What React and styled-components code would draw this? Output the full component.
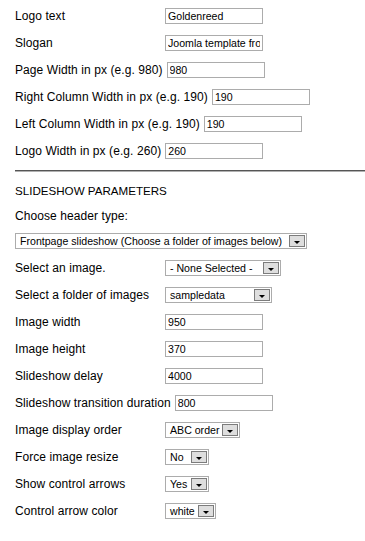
import styled, { createGlobalStyle } from "styled-components";

const Global = createGlobalStyle`
  body {
    margin: 0;
    background: #fff;
    font-family: "Liberation Sans", Arial, sans-serif;
    color: #000;
  }
`;

const Page = styled.div`
  padding: 8px 0 20px 15px;
  width: 365px;
  box-sizing: border-box;
`;

const Row = styled.div`
  display: flex;
  align-items: flex-start;
  gap: 4px;
  height: 16px;
  margin-bottom: 11px;
`;

const Label = styled.label`
  min-width: 146px;
  font-size: 12px;
  line-height: 14px;
  letter-spacing: 0.08px;
  padding-top: 1px;
  white-space: nowrap;
`;

const Field = styled.input`
  box-sizing: border-box;
  width: 98px;
  height: 16px;
  margin: 0;
  padding: 0 2px;
  border: 1px solid #acacac;
  font-family: "Liberation Sans", Arial, sans-serif;
  font-size: 10.6px;
  color: #000;
  outline: none;
`;

const Rule = styled.hr`
  height: 0;
  margin: 0;
  border: none;
  border-top: 1px solid #555;
  border-bottom: 1px solid #b0b0b0;
`;

const Heading = styled.div`
  margin-top: 12px;
  font-size: 11.6px;
  line-height: 14px;
`;

const Caption = styled.div`
  margin: 11px 0 10px;
  font-size: 12px;
  line-height: 14px;
  letter-spacing: 0.08px;
`;

const Select = styled.div`
  box-sizing: border-box;
  display: flex;
  align-items: center;
  width: ${(p) => p.w}px;
  height: 16px;
  border: 1px solid #acacac;
  font-size: 10.6px;
  background: #fff;
`;

const SelectText = styled.span`
  flex: 1;
  padding-left: 4px;
  white-space: nowrap;
  overflow: hidden;
`;

const ArrowBox = styled.span`
  box-sizing: border-box;
  display: flex;
  align-items: center;
  justify-content: center;
  flex-shrink: 0;
  width: 16px;
  height: 12px;
  margin-right: 1px;
  border: 1px solid #7c7c7c;
  background: #dedede;

  &::after {
    content: "";
    margin-top: 2px;
    border-left: 3px solid transparent;
    border-right: 3px solid transparent;
    border-top: 3px solid #000;
  }
`;

function Dropdown({ w, value }) {
  return (
    <Select w={w} role="combobox">
      <SelectText>{value}</SelectText>
      <ArrowBox />
    </Select>
  );
}

const top = [
  ["Logo text", "Goldenreed"],
  ["Slogan", "Joomla template from Siteground"],
  ["Page Width in px (e.g. 980)", "980"],
  ["Right Column Width in px (e.g. 190)", "190"],
  ["Left Column Width in px (e.g. 190)", "190"],
  ["Logo Width in px (e.g. 260)", "260"],
];

const slides = [
  ["Select an image.", "select", "- None Selected -", 116],
  ["Select a folder of images", "select", "sampledata", 107],
  ["Image width", "text", "950"],
  ["Image height", "text", "370"],
  ["Slideshow delay", "text", "4000"],
  ["Slideshow transition duration", "text", "800"],
  ["Image display order", "select", "ABC order", 75],
  ["Force image resize", "select", "No", 44],
  ["Show control arrows", "select", "Yes", 44],
  ["Control arrow color", "select", "white", 51],
];

export default function App() {
  return (
    <Page>
      <Global />
      {top.map(([label, value]) => (
        <Row key={label}>
          <Label>{label}</Label>
          <Field defaultValue={value} readOnly />
        </Row>
      ))}
      <Rule />
      <Heading>SLIDESHOW PARAMETERS</Heading>
      <Caption>Choose header type:</Caption>
      <Row>
        <Dropdown w={292} value="Frontpage slideshow (Choose a folder of images below)" />
      </Row>
      {slides.map(([label, kind, value, w]) => (
        <Row key={label}>
          <Label>{label}</Label>
          {kind === "select" ? (
            <Dropdown w={w} value={value} />
          ) : (
            <Field defaultValue={value} readOnly />
          )}
        </Row>
      ))}
    </Page>
  );
}
